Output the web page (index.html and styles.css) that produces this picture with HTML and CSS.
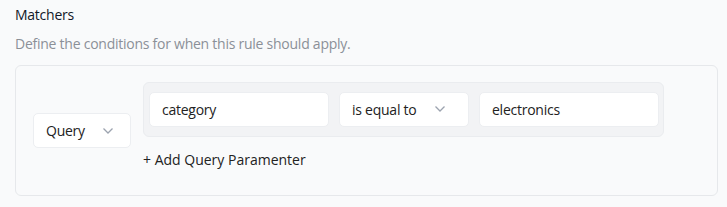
FILE: index.html
```html
<!DOCTYPE html>
<html lang="en">
<head>
  <meta charset="UTF-8">
  <title>Matchers</title>
  <link rel="stylesheet" href="styles.css">
</head>
<body>
  <section class="matchers">
    <h3>Matchers</h3>
    <p class="hint">Define the conditions for when this rule should apply.</p>

    <div class="panel">
      <div class="select type-select">
        <span>Query</span>
        <svg class="chev" width="12" height="8" viewBox="0 0 12 8"><path d="M1.5 1.5 L6 6 L10.5 1.5" fill="none" stroke="#9ca3af" stroke-width="1.3"/></svg>
      </div>

      <div class="params">
        <div class="row">
          <div class="field key">category</div>
          <div class="select op-select">
            <span>is equal to</span>
            <svg class="chev" width="12" height="8" viewBox="0 0 12 8"><path d="M1.5 1.5 L6 6 L10.5 1.5" fill="none" stroke="#9ca3af" stroke-width="1.3"/></svg>
          </div>
          <div class="field value">electronics</div>
        </div>
        <button class="add">+ Add Query Paramenter</button>
      </div>
    </div>
  </section>
</body>
</html>
```

FILE: styles.css
```css
body {
  margin: 0;
  background: #f9fafb;
  font-family: "Open Sans", "Noto Sans", sans-serif;
  font-size: 14px;
  letter-spacing: -0.25px;
  color: #1f2328;
}
.matchers {
  padding: 4px 9px 0 15px;
}
h3 {
  margin: 0;
  font-size: 14px;
  font-weight: 500;
  line-height: 22px;
  color: #111827;
}
.hint {
  margin: 7px 0 10px;
  line-height: 22px;
  color: #8b9098;
}
.panel {
  display: flex;
  align-items: center;
  gap: 12px;
  border: 1px solid #e6e8eb;
  border-radius: 6px;
  height: 129px;
  padding: 0 17px;
}
.select,
.field {
  background: #fff;
  border: 1px solid #eceef1;
  border-radius: 5px;
  box-sizing: border-box;
  height: 35px;
  display: flex;
  align-items: center;
  padding: 0 12px;
  color: #222;
}
.select {
  justify-content: space-between;
}
.type-select {
  width: 98px;
  padding-right: 16px;
}
.params {
  margin-bottom: 9px;
}
.row {
  display: flex;
  gap: 10px;
  background: #f2f3f5;
  border: 1px solid #eaecef;
  border-radius: 6px;
  padding: 9px 4px 9px 5px;
}
.key,
.value {
  width: 180px;
}
.op-select {
  width: 130px;
  padding-right: 22px;
}
.add {
  margin-top: 12px;
  padding: 0;
  border: none;
  background: none;
  font: inherit;
  color: #222;
  line-height: 22px;
  cursor: pointer;
}
```
